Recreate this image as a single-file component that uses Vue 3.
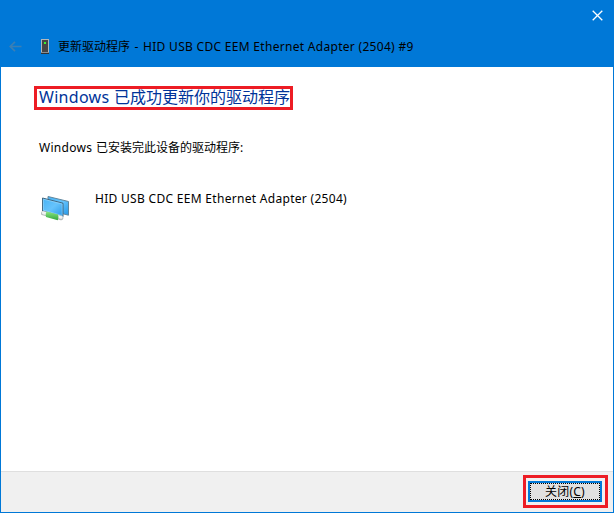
<script setup>
const device = 'HID USB CDC EEM Ethernet Adapter (2504)'
</script>

<template>
  <div class="window">
    <header class="header">
      <div class="titlebar">
        <svg class="close" width="11" height="11" viewBox="0 0 11 11"><path d="M.7.7 10.3 10.3M10.3.7.7 10.3" stroke="#fff" stroke-width="1.3" /></svg>
      </div>
      <div class="caption">
        <svg class="back" width="13" height="11" viewBox="0 0 13 11"><path d="M12.5 5.5H1.2M6 .8 1.2 5.5 6 10.2" fill="none" stroke="#3a7fb5" stroke-width="1.7" /></svg>
        <svg class="tower" width="8" height="15" viewBox="0 0 8 15">
          <rect width="8" height="13" fill="#b4b8bb" /><rect x="1" y="1" width="6" height="12" fill="#454647" />
          <rect x="3" y="3" width="2" height="2" fill="#37f536" /><rect y="13" width="8" height="1" fill="#8a8d90" /><rect y="14" width="8" height="1" fill="#303336" />
        </svg>
        <h1 class="title"><span>更新驱动程序</span><span class="dash">-</span><span class="latin">{{ device }} #9</span></h1>
      </div>
    </header>
    <main class="content">
      <h2 class="result"><span class="win">Windows</span><span>已成功更新你的驱动程序</span></h2>
      <p class="message"><span class="win">Windows</span><span>已安装完此设备的驱动程序:</span></p>
      <div class="device">
        <svg width="29" height="27" viewBox="0 0 29 27">
          <defs>
            <linearGradient id="screen" x1="0" y1="0" x2="1" y2="1"><stop offset="0" stop-color="#45b2f5" /><stop offset=".5" stop-color="#66c3fc" /><stop offset="1" stop-color="#2598e8" /></linearGradient>
            <linearGradient id="cable" x1="0" y1="0" x2="0" y2="1"><stop offset="0" stop-color="#8be582" /><stop offset="1" stop-color="#32a83d" /></linearGradient>
          </defs>
          <path d="M7 1.5 27.5 6.5v13.7L7 15Z" fill="url(#screen)" stroke="#61879e" stroke-width="1" />
          <path d="M1.5 3 22 8.2v13.6L1.5 16Z" fill="url(#screen)" stroke="#42677f" stroke-width="1" />
          <path d="M2.4 4.2 21.1 9v11.6L2.4 15.2Z" fill="none" stroke="#a8ddfb" stroke-width=".5" />
          <path d="M2.2 18.2 20.2 23" stroke="#b5bcbc" stroke-width="4.4" stroke-linecap="round" />
          <path d="M2.2 17.8 20.2 22.4" stroke="#f0f2f2" stroke-width="2.8" stroke-linecap="round" />
          <path d="M5.5 16.6 17 19.6q1.3 3-.2 5.6L5 22.1q-1-3 .5-5.5Z" fill="url(#cable)" />
        </svg>
        <span class="name">{{ device }}</span>
      </div>
    </main>
    <footer class="footer">
      <div class="highlight"><button class="button"><span>关闭(<u>C</u>)</span></button></div>
    </footer>
  </div>
</template>

<style>
body { margin: 0; overflow: hidden; }
</style>

<style scoped>
* { box-sizing: border-box; }
.window { width: 614px; height: 513px; display: flex; flex-direction: column; background: #fff; border: 1px solid #0078d7; border-top: 0; font: 12px/18px "Noto Sans", "Noto Sans CJK SC", sans-serif; color: #000; }
.header { height: 67px; flex: none; background: #0078d7; }
.titlebar { height: 30px; padding: 10px 10px 0 0; display: flex; justify-content: flex-end; }
.caption { display: flex; align-items: center; height: 32px; padding-left: 8px; }
.tower { margin-left: 19px; }
.title { margin: 0 0 0 9px; padding-top: 2px; font-size: 12px; font-weight: 400; white-space: nowrap; display: flex; }
.dash { width: 13px; text-align: center; }
.latin, .win, .name { letter-spacing: .3px; }
.content { flex: 1; padding: 19px 0 0 33px; }
.result { width: 259px; height: 24px; margin: 0; border: 3px solid #ed1c24; padding-left: 2px; font-size: 16px; line-height: 17px; font-weight: 400; color: #003399; white-space: nowrap; display: flex; }
.result .win { width: 75px; flex: none; }
.message { margin: 29px 0 0 5px; white-space: nowrap; display: flex; }
.message .win { width: 57px; }
.device { display: flex; margin: 33px 0 0 7px; gap: 25px; }
.device svg { margin-top: 5px; }
.device .name { white-space: nowrap; }
.footer { height: 41px; flex: none; background: #f0f0f0; border-top: 1px solid #dfdfdf; display: flex; justify-content: flex-end; padding: 3px 5px 0 0; }
.highlight { width: 85px; height: 33px; border: 3px solid #ed1c24; padding: 3px 3px 3px 2px; }
.button { display: flex; justify-content: center; align-items: center; width: 74px; height: 21px; border: 2px solid #0078d7; background: #e1e1e1; padding: 0; font: inherit; letter-spacing: .2px; color: #000; outline: 1px dotted #000; outline-offset: -3px; }
</style>
